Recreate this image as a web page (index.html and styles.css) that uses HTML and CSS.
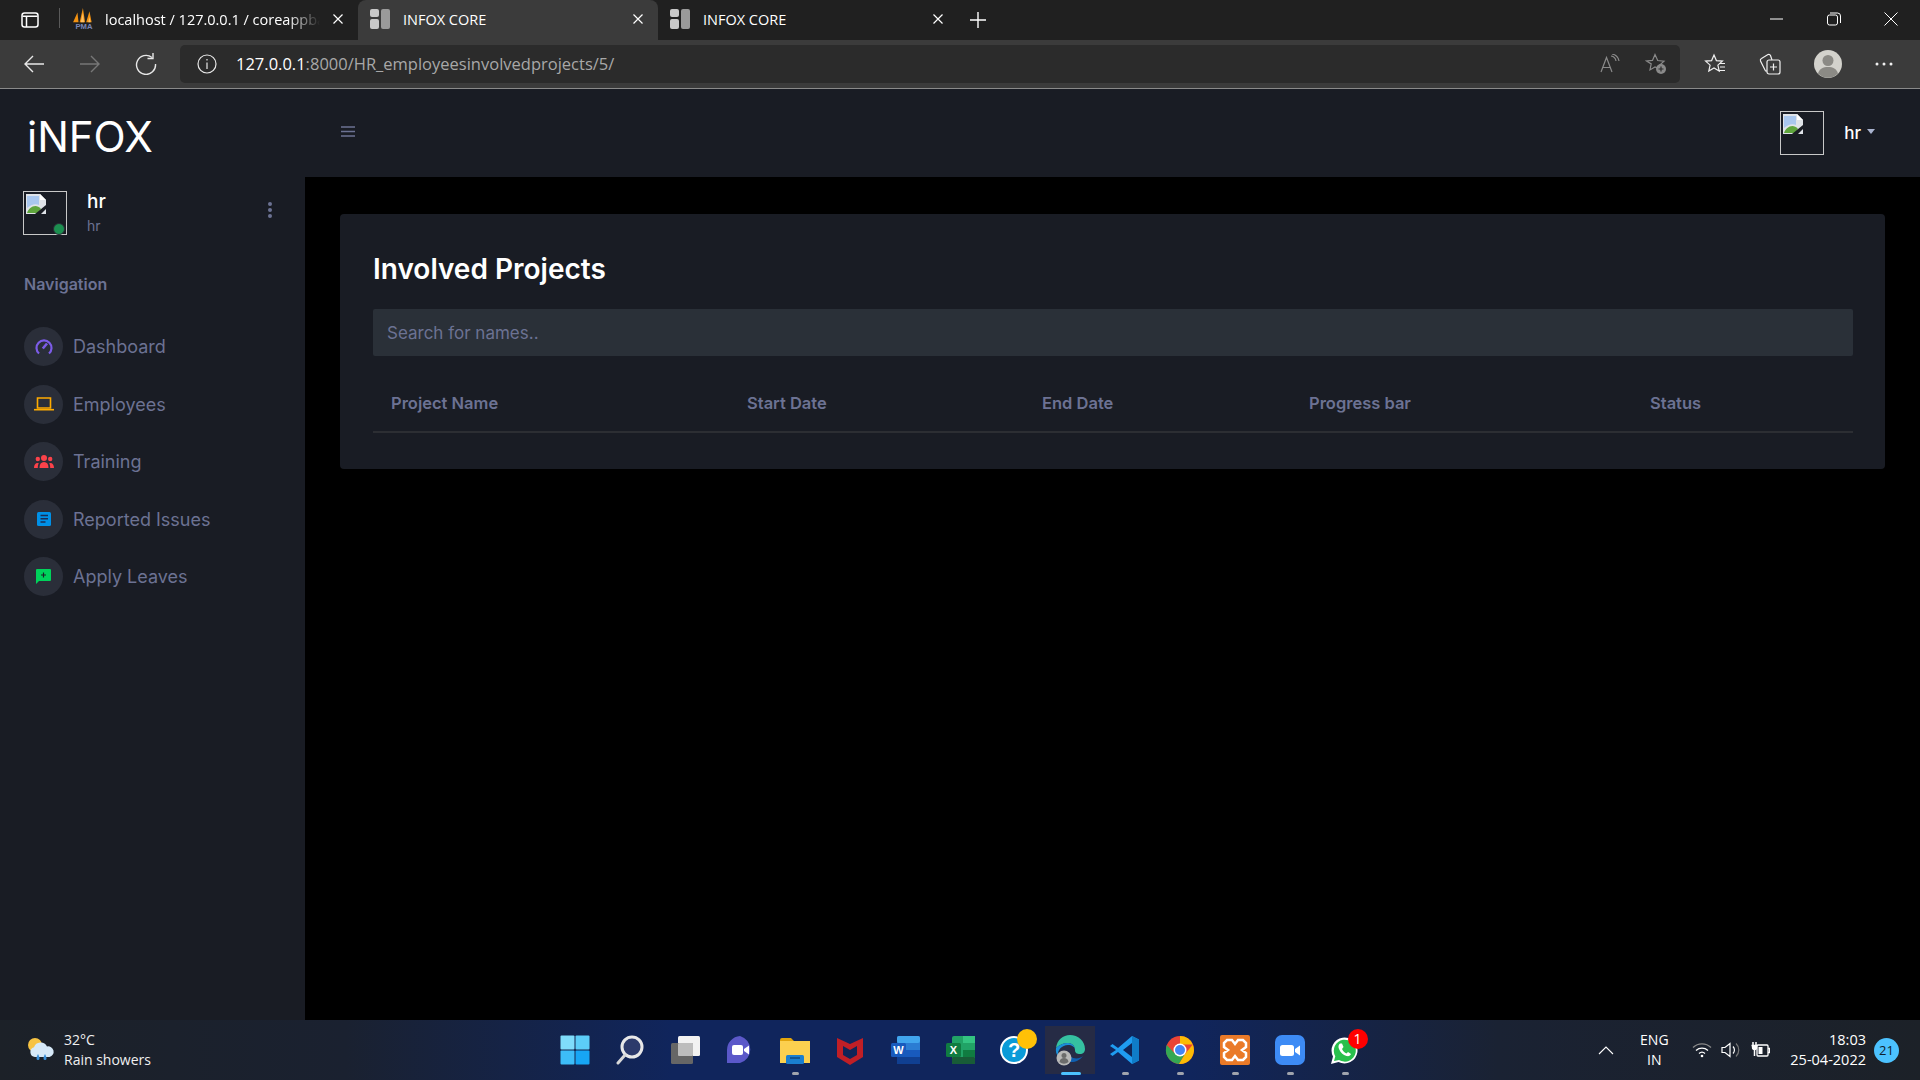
FILE: index.html
```html
<!DOCTYPE html>
<html lang="en">
<head>
  <meta charset="UTF-8">
  <meta name="viewport" content="width=device-width, initial-scale=1.0">
  <title>INFOX CORE</title>
  <link rel="stylesheet" href="styles.css">
</head>
<body>
  <!-- browser tabs -->
  <div class="tabstrip">
    <div class="tab-toggle">
      <svg width="20" height="20" viewBox="0 0 20 20" fill="none" stroke="#fff" stroke-width="1.5"><rect x="2" y="3" width="16" height="14" rx="2.5"/><path d="M2.5 6.2h15M6.5 6.2V17"/></svg>
    </div>
    <div class="tab tab-first">
      <svg class="favicon" width="24" height="24" viewBox="0 0 22 22"><path d="M1 14 5 5l1 9zM7 14l3-13 2 13zM13 14l3-10 2 10z" fill="#f29111"/><path d="M8 14l2-9 1 9zM15 14l1-5 1 5z" fill="#ffc266"/><text x="11" y="20.500" text-anchor="middle" class="pma">PMA</text></svg>
      <span class="tab-title tab-fade">localhost / 127.0.0.1 / coreappba</span>
      <svg class="tab-close" width="12" height="12" viewBox="0 0 12 12" stroke="#fff" stroke-width="1.2"><path d="M1.500 1.500l9 9M10.500 1.500l-9 9"/></svg>
    </div>
    <div class="tab tab-active">
      <svg class="favicon" width="20" height="20" viewBox="0 0 20 20" fill="#c8c8c8"><rect x="0" y="0" width="9" height="8" rx="2"/><rect x="0" y="10" width="9" height="10" rx="2"/><rect x="11" y="0" width="9" height="20" rx="2" fill="#9a9a9a"/></svg>
      <span class="tab-title">INFOX CORE</span>
      <svg class="tab-close" width="12" height="12" viewBox="0 0 12 12" stroke="#fff" stroke-width="1.2"><path d="M1.500 1.500l9 9M10.500 1.500l-9 9"/></svg>
    </div>
    <div class="tab">
      <svg class="favicon" width="20" height="20" viewBox="0 0 20 20" fill="#c8c8c8"><rect x="0" y="0" width="9" height="8" rx="2"/><rect x="0" y="10" width="9" height="10" rx="2"/><rect x="11" y="0" width="9" height="20" rx="2" fill="#9a9a9a"/></svg>
      <span class="tab-title">INFOX CORE</span>
      <svg class="tab-close" width="12" height="12" viewBox="0 0 12 12" stroke="#fff" stroke-width="1.2"><path d="M1.500 1.500l9 9M10.500 1.500l-9 9"/></svg>
    </div>
    <div class="tab-new">
      <svg width="18" height="18" viewBox="0 0 18 18" stroke="#fff" stroke-width="1.4"><path d="M9 1v16M1 9h16"/></svg>
    </div>
    <div class="window-controls">
      <svg width="14" height="14" viewBox="0 0 14 14" stroke="#fff" stroke-width="1"><path d="M0 7h13"/></svg>
      <svg width="14" height="14" viewBox="0 0 14 14" fill="none" stroke="#fff" stroke-width="1"><rect x="0.500" y="3" width="10" height="10" rx="2"/><path d="M3 1h7.500a3 3 0 0 1 3 3v7"/></svg>
      <svg width="14" height="14" viewBox="0 0 14 14" stroke="#fff" stroke-width="1"><path d="M0.500 0.500l13 13M13.500 0.500l-13 13"/></svg>
    </div>
  </div>

  <!-- browser address bar -->
  <div class="toolbar">
    <div class="nav-buttons">
      <svg width="22" height="22" viewBox="0 0 22 22" fill="none" stroke="#e8e8e8" stroke-width="1.4"><path d="M21 11H2M10 3l-8 8 8 8"/></svg>
      <svg width="22" height="22" viewBox="0 0 22 22" fill="none" stroke="#777" stroke-width="1.4"><path d="M1 11h19M12 3l8 8-8 8"/></svg>
      <svg width="22" height="22" viewBox="0 0 22 22" fill="none" stroke="#e8e8e8" stroke-width="1.4"><path d="M17 4.500A9.500 9.500 0 1 0 20.500 11"/><path d="M12.500 5.500H18V0"/></svg>
    </div>
    <div class="address">
      <svg width="20" height="20" viewBox="0 0 20 20" fill="none" stroke="#e8e8e8" stroke-width="1.2"><circle cx="10" cy="10" r="9"/><path d="M10 8.500V15M10 5v1.600"/></svg>
      <span class="url"><span class="url-host">127.0.0.1</span>:8000/HR_employeesinvolvedprojects/5/</span>
      <div class="address-actions">
        <svg width="20" height="20" viewBox="0 0 20 20" fill="none" stroke="#8a8a8a" stroke-width="1.2"><path d="M1 18 6.500 3.500 12 18M3 13.500h7M11 2a6 6 0 0 1 5 5M12 0a9 9 0 0 1 7 7"/></svg>
        <svg width="22" height="22" viewBox="0 0 22 22" fill="none" stroke="#8a8a8a" stroke-width="1.2"><path d="M10 1.500l2.700 6 6.300.6-4.700 4.300 1 4-5.300-2.500-5 3 1.200-6L1.500 8l6-.6z"/><circle cx="16" cy="16" r="5" fill="#8a8a8a" stroke="none"/><path d="M16 13.500v5M13.500 16h5" stroke="#2b2b2b"/></svg>
      </div>
    </div>
    <div class="toolbar-actions">
      <svg width="22" height="22" viewBox="0 0 22 22" fill="none" stroke="#f0f0f0" stroke-width="1.2"><path d="M10 2l2.400 5.600 6 .5-4.500 4 1.300 6-5.200-3.100-5.200 3.100 1.300-6-4.500-4 6-.5zM15 10.500h6M16 14h5M14 17.500h7"/></svg>
      <svg width="22" height="22" viewBox="0 0 22 22" fill="none" stroke="#f0f0f0" stroke-width="1.2"><rect x="8" y="7" width="13" height="14" rx="2"/><path d="M14.500 10.500v7M11 14h7M8 18H6.500L1.500 8a2 2 0 0 1 1-2.500L9 1.500a2 2 0 0 1 2.500 1L13 7"/></svg>
      <svg width="28" height="28" viewBox="0 0 28 28"><circle cx="14" cy="14" r="14" fill="#d3d2cc"/><circle cx="14" cy="10.500" r="5.500" fill="#8b8a85"/><path d="M4 23.500c1.500-5 5-6.500 10-6.500s8.500 1.500 10 6.500a14 14 0 0 1-20 0z" fill="#8b8a85"/></svg>
      <svg width="18" height="6" viewBox="0 0 18 6" fill="#f0f0f0"><circle cx="2" cy="3" r="1.500"/><circle cx="9" cy="3" r="1.500"/><circle cx="16" cy="3" r="1.500"/></svg>
    </div>
  </div>

  <!-- the page -->
  <div class="app">
    <aside class="sidebar">
      <div class="brand">iNFOX</div>
      <div class="profile">
        <div class="avatar avatar-sm">
          <svg width="20" height="20" viewBox="0 0 20 20"><path d="M0 0h14l6 6v14H0z" fill="#dfe3e8"/><path d="M1 2h12v9c-4-2-8 0-12 3z" fill="#a9c7ee"/><path d="M1 19c2-6 9-10 14-4l-3 4z" fill="#5fa53d"/><path d="M9 20 20 11v4l-5 5z" fill="#1a1d24"/><path d="M14 0l6 6h-6z" fill="#fff"/></svg>
          <span class="online"></span>
        </div>
        <div class="profile-text">
          <div class="profile-name">hr</div>
          <div class="profile-role">hr</div>
        </div>
        <svg class="profile-more" width="6" height="16" viewBox="0 0 6 16" fill="#6c7293"><circle cx="3" cy="2" r="2"/><circle cx="3" cy="8" r="2"/><circle cx="3" cy="14" r="2"/></svg>
      </div>
      <div class="nav-title">Navigation</div>
      <ul class="menu">
        <li>
          <span class="menu-icon"><svg width="18" height="18" viewBox="0 0 18 18" fill="none" stroke="#7c5ce8" stroke-width="2.200"><path d="M4 15.500a7.500 7.500 0 1 1 10 0"/><path d="M7.800 10.500 12 5.500" stroke-width="2.600"/></svg></span>
          <span>Dashboard</span>
        </li>
        <li>
          <span class="menu-icon"><svg width="20" height="14" viewBox="0 0 20 14" fill="none" stroke="#ffab00" stroke-width="1.600"><path d="M3.500 1h13v10h-13z"/><path d="M0 12.700h20"/></svg></span>
          <span>Employees</span>
        </li>
        <li>
          <span class="menu-icon"><svg width="20" height="13" viewBox="0 0 20 13" fill="#fc424a"><circle cx="10" cy="3" r="3"/><circle cx="3.800" cy="4" r="2.200"/><circle cx="16.200" cy="4" r="2.200"/><path d="M5.500 13c0-4 1.500-6 4.500-6s4.500 2 4.500 6zM0 13c0-3 1.200-5 3.800-5l1 .3C4 9.500 3.800 11 3.800 13zM20 13c0-3-1.200-5-3.800-5l-1 .3c.8 1.200 1 2.700 1 4.700z"/></svg></span>
          <span>Training</span>
        </li>
        <li>
          <span class="menu-icon"><svg width="14" height="14" viewBox="0 0 14 14"><rect width="14" height="14" rx="1.500" fill="#0090e7"/><path d="M3.500 3.500h7.500M3.500 6.800h7.500M3.500 10h5" stroke="#1a2c55" stroke-width="1.500"/></svg></span>
          <span>Reported Issues</span>
        </li>
        <li>
          <span class="menu-icon"><svg width="15" height="15" viewBox="0 0 15 15"><path d="M1 0h13a1 1 0 0 1 1 1v10a1 1 0 0 1-1 1H3l-3 3V1a1 1 0 0 1 1-1z" fill="#00d25b"/><path d="M7.500 3.500v5M5 6h5" stroke="#1a2028" stroke-width="1.200"/></svg></span>
          <span>Apply Leaves</span>
        </li>
      </ul>
    </aside>

    <div class="main">
      <header class="topbar">
        <svg class="hamburger" width="14" height="11" viewBox="0 0 14 11" stroke="#6c7293" stroke-width="1.300"><path d="M0 1h14M0 5.500h14M0 10h14"/></svg>
        <div class="topbar-user">
          <div class="avatar">
            <svg width="20" height="20" viewBox="0 0 20 20"><path d="M0 0h14l6 6v14H0z" fill="#dfe3e8"/><path d="M1 2h12v9c-4-2-8 0-12 3z" fill="#a9c7ee"/><path d="M1 19c2-6 9-10 14-4l-3 4z" fill="#5fa53d"/><path d="M9 20 20 11v4l-5 5z" fill="#1a1d24"/><path d="M14 0l6 6h-6z" fill="#fff"/></svg>
          </div>
          <span class="topbar-name">hr</span>
          <span class="caret"></span>
        </div>
      </header>

      <main class="content">
        <section class="card">
          <h1 class="card-title">Involved Projects</h1>
          <input class="search" type="text" placeholder="Search for names..">
          <table class="projects">
            <thead>
              <tr>
                <th class="col-name">Project Name</th>
                <th class="col-start">Start Date</th>
                <th class="col-end">End Date</th>
                <th class="col-progress">Progress bar</th>
                <th>Status</th>
              </tr>
            </thead>
          </table>
        </section>
      </main>
    </div>
  </div>

  <!-- windows taskbar -->
  <footer class="taskbar">
    <div class="weather">
      <svg width="28" height="26" viewBox="0 0 28 26"><circle cx="8" cy="8" r="7" fill="#f6c343"/><path d="M8 20a5 5 0 0 1-1-9.800A7 7 0 0 1 20 9.500a5.300 5.300 0 0 1 2.500 10.500z" fill="#d6e9f8"/><path d="M11 17c1 2 1.500 3 1.500 4.500a1.500 1.500 0 0 1-3 0c0-1.500.5-2.500 1.500-4.500zM18 17c1 2 1.500 3 1.500 4.500a1.500 1.500 0 0 1-3 0c0-1.500.5-2.500 1.500-4.500z" fill="#3b8fd8"/></svg>
      <div class="weather-text">
        <div>32°C</div>
        <div>Rain showers</div>
      </div>
    </div>

    <div class="task-icons">
      <div class="task-icon">
        <svg width="30" height="30" viewBox="0 0 30 30"><rect x="0.500" y="0.500" width="14" height="14" rx="1" fill="#7fdcfb"/><rect x="15.500" y="0.500" width="14" height="14" rx="1" fill="#5ccdf8"/><rect x="0.500" y="15.500" width="14" height="14" rx="1" fill="#3dbdf8"/><rect x="15.500" y="15.500" width="14" height="14" rx="1" fill="#17a6f5"/></svg>
      </div>
      <div class="task-icon">
        <svg width="30" height="30" viewBox="0 0 30 30" fill="none"><circle cx="17" cy="12" r="10" fill="#2c3a6b" stroke="#e8e8e8" stroke-width="3"/><path d="M10 20 3 28" stroke="#d8d8d8" stroke-width="3" stroke-linecap="round"/></svg>
      </div>
      <div class="task-icon">
        <svg width="30" height="30" viewBox="0 0 30 30"><rect x="8" y="1" width="22" height="20" rx="1.500" fill="#f2f2f2"/><rect x="1" y="8" width="22" height="21" rx="1.500" fill="#666"/><rect x="8" y="8" width="15" height="13" rx="1" fill="#bdbdbd"/></svg>
      </div>
      <div class="task-icon">
        <svg width="30" height="30" viewBox="0 0 30 30"><path d="M15 1a14 14 0 0 1 0 27H2v-13A14 14 0 0 1 15 1z" fill="#5b58c9"/><path d="M15 1a14 14 0 0 1 0 27 14 14 0 0 0 0-27z" fill="#8177e0"/><rect x="7" y="10" width="11" height="10" rx="2" fill="#fff"/><path d="M19 14l5-3.500v9L19 16z" fill="#fff"/></svg>
      </div>
      <div class="task-icon task-running">
        <svg width="30" height="30" viewBox="0 0 30 30"><path d="M0 5a2 2 0 0 1 2-2h9l3 3h16v22H0z" fill="#e3a50c"/><rect x="0" y="6" width="30" height="22" fill="#fcd04f"/><rect x="6" y="20" width="18" height="9" rx="1.500" fill="#1a7fd0"/><path d="M10 23h10" stroke="#0d3c70" stroke-width="1.200"/></svg>
      </div>
      <div class="task-icon">
        <svg width="28" height="30" viewBox="0 0 28 30"><path d="M1 3l13 6 13-6v19l-13 8-13-8z" fill="#c01f26"/><path d="M7 11l7 4 7-4v9l-7 4-7-4z" fill="#0f2558"/></svg>
      </div>
      <div class="task-icon">
        <svg width="30" height="30" viewBox="0 0 30 30"><rect x="7" y="1" width="23" height="28" rx="2" fill="#2b7cd3"/><rect x="7" y="1" width="23" height="7" rx="2" fill="#41a5ee"/><rect x="7" y="15" width="23" height="7" fill="#185abd"/><rect x="7" y="22" width="23" height="7" fill="#103f91"/><rect x="1" y="8" width="15" height="14" rx="1.500" fill="#185abd"/><text x="8.500" y="19" text-anchor="middle" class="icon-letter">W</text></svg>
      </div>
      <div class="task-icon">
        <svg width="30" height="30" viewBox="0 0 30 30"><rect x="7" y="1" width="23" height="28" rx="2" fill="#21a366"/><rect x="18" y="1" width="12" height="7" fill="#33c481"/><rect x="18" y="15" width="12" height="7" fill="#107c41"/><rect x="7" y="22" width="23" height="7" rx="1" fill="#185c37"/><rect x="1" y="8" width="15" height="14" rx="1.500" fill="#107c41"/><text x="8.500" y="19" text-anchor="middle" class="icon-letter">X</text></svg>
      </div>
      <div class="task-icon">
        <svg width="30" height="30" viewBox="0 0 30 30"><circle cx="14" cy="15" r="13" fill="#0a9bd8" stroke="#fff" stroke-width="2"/><text x="14" y="22" text-anchor="middle" class="icon-help">?</text></svg>
        <span class="task-dot-yellow"></span>
      </div>
      <div class="task-icon task-active">
        <svg width="30" height="32" viewBox="0 0 30 32"><path d="M1 14C2 6 8 1 15 1c8 0 15 6 15 14 0 3-2 5-5 5-3 0-5-1-5-4 0-4-3-7-7-7-5 0-9 2-12 5z" fill="#35c1a1"/><path d="M1 14c3-3 7-5 12-5 4 0 7 3 7 7 0-3-3-5-7-5-6 0-11 5-10 11C1 20 .6 17 1 14z" fill="#1a8fd8"/><path d="M10 26c5 4 14 2 18-4-3 3-9 3-12 1-3-1-6 0-6 3z" fill="#0f5fb0"/><circle cx="9" cy="24" r="7.500" fill="#b8b8b8"/><circle cx="9" cy="21.500" r="2.500" fill="#6c6c6c"/><path d="M4.500 28c.5-3 2-4 4.500-4s4 1 4.500 4a7 7 0 0 1-9 0z" fill="#6c6c6c"/></svg>
      </div>
      <div class="task-icon task-running">
        <svg width="30" height="30" viewBox="0 0 30 30"><path d="M22 1l7 3.500v21L22 29 8 17l-5.500 4L0 19l6-4-6-4 2.500-2L8 13z" fill="#1f9cf0"/><path d="M22 1l7 3.500v21L22 29z" fill="#0f7cc8"/><path d="M22 8 13 15l9 7z" fill="#0f2558"/></svg>
      </div>
      <div class="task-icon task-running">
        <svg width="30" height="30" viewBox="0 0 30 30"><circle cx="15" cy="15" r="14" fill="#ea4335"/><path d="M15 1a14 14 0 0 1 12.800 8.500H15z" fill="#fbbc05"/><path d="M27.800 9.500a14 14 0 0 1-14 19.500L20 19z" fill="#fbbc05"/><path d="M1.800 10a14 14 0 0 0 12 19l6-10-10.500-1z" fill="#34a853"/><circle cx="15" cy="15" r="6.500" fill="#fff"/><circle cx="15" cy="15" r="5" fill="#4285f4"/></svg>
      </div>
      <div class="task-icon task-running">
        <svg width="30" height="30" viewBox="0 0 30 30"><rect x="0" y="0" width="30" height="30" rx="2" fill="#ea7a28"/><path d="M7 5h5l3 4 3-4h5l3 3v4l-4 3 4 3v4l-3 3h-5l-3-4-3 4H7l-3-3v-4l4-3-4-3V8z" fill="none" stroke="#fff" stroke-width="2.500"/></svg>
      </div>
      <div class="task-icon task-running">
        <svg width="30" height="30" viewBox="0 0 30 30"><rect width="30" height="30" rx="7" fill="#3d8bf5"/><rect x="5" y="10" width="14" height="11" rx="2.500" fill="#fff"/><path d="M20 14l5-3.500v10L20 17z" fill="#fff"/></svg>
      </div>
      <div class="task-icon task-running">
        <svg width="30" height="30" viewBox="0 0 30 30"><path d="M1 29l2-7.500A13 13 0 1 1 8.500 27z" fill="#fff"/><path d="M4 26l1.300-4.800A11 11 0 1 1 9 25z" fill="#28c04c"/><path d="M10 8.500c-1.500 1-2 3-1 5.500 1.500 3.500 4 6 7.500 7 2.500.6 4-.5 4.500-2l-3-2-1.500 1.500c-2-.8-3.500-2.300-4.500-4.500L13.500 12l-1.500-3.500z" fill="#fff"/></svg>
        <span class="task-badge">1</span>
      </div>
    </div>

    <div class="tray">
      <svg class="tray-chevron" width="16" height="9" viewBox="0 0 16 9" fill="none" stroke="#fff" stroke-width="1.100"><path d="M1 8l7-7 7 7"/></svg>
      <div class="tray-lang">
        <div>ENG</div>
        <div>IN</div>
      </div>
      <svg width="20" height="16" viewBox="0 0 20 16" fill="none" stroke="#fff" stroke-width="1.300"><path d="M1 5.500a13 13 0 0 1 18 0" stroke="#8a8a8a"/><path d="M4 8.500a9 9 0 0 1 12 0M7 11.500a4.500 4.500 0 0 1 6 0"/><circle cx="10" cy="14" r="1.300" fill="#fff" stroke="none"/></svg>
      <svg width="20" height="18" viewBox="0 0 20 18" fill="none" stroke="#fff" stroke-width="1.200"><path d="M1 6.500h3l5-4v13l-5-4H1z"/><path d="M12 5.500a5 5 0 0 1 0 7"/><path d="M15 2.500a9 9 0 0 1 0 13" stroke="#777"/></svg>
      <svg width="20" height="18" viewBox="0 0 20 18" fill="none" stroke="#fff" stroke-width="1.300"><rect x="7" y="4" width="11" height="11" rx="1"/><path d="M18 7.500h1.500v4H18"/><rect x="8.500" y="6" width="4" height="7" fill="#fff" stroke="none"/><path d="M3 1v3M6 1v3M1.500 4.500h6M4.500 8v7" stroke-width="1.500"/><path d="M2.500 5v1.500a2 2 0 0 0 4 0V5" fill="#fff"/></svg>
      <div class="tray-clock">
        <div>18:03</div>
        <div>25-04-2022</div>
      </div>
      <span class="tray-count">21</span>
    </div>
  </footer>
</body>
</html>
```

FILE: styles.css
```css
/* styles.css */
* {
  box-sizing: border-box;
}

body {
  margin: 0;
  height: 100vh;
  overflow: hidden;
  display: flex;
  flex-direction: column;
  background-color: #000;
  font-family: Inter, Roboto, sans-serif;
}

/* browser tabs */
.tabstrip {
  height: 40px;
  display: flex;
  background-color: #202020;
  color: #fff;
  font-family: "Open Sans", sans-serif;
  font-size: 14.500px;
}

.tab-toggle {
  width: 60px;
  display: flex;
  align-items: center;
  padding-left: 20px;
  position: relative;
}

.tab-toggle::after {
  content: "";
  position: absolute;
  right: 0;
  top: 8px;
  bottom: 12px;
  width: 1px;
  background-color: #5a5a5a;
}

.tab {
  width: 300px;
  height: 40px;
  display: flex;
  align-items: center;
  padding: 0 14px 2px 12px;
}

.tab-first {
  width: 298px;
}

.tab-active {
  background-color: #3b3b3b;
  border-radius: 8px 8px 0 0;
}

.favicon {
  flex: none;
}

.pma {
  font: bold 7px "Liberation Sans", sans-serif;
  fill: #7a86b8;
}

.tab-title {
  flex: 1;
  margin-left: 13px;
  white-space: nowrap;
  overflow: hidden;
}

.tab-fade {
  margin-left: 9px;
  -webkit-mask-image: linear-gradient(to right, #000 85%, transparent 100%);
  mask-image: linear-gradient(to right, #000 85%, transparent 100%);
}

.tab-close {
  flex: none;
  margin-left: 12px;
}

.tab-new {
  display: flex;
  align-items: center;
  margin-left: 11px;
}

.window-controls {
  margin-left: auto;
  display: flex;
  align-items: center;
  gap: 43px;
  padding: 0 22px 2px 0;
}

/* address bar */
.toolbar {
  height: 49px;
  display: flex;
  align-items: center;
  padding-bottom: 1px;
  background-color: #3b3b3b;
  border-bottom: 1px solid #8a8a8a;
}

.nav-buttons {
  width: 180px;
  display: flex;
  align-items: center;
  gap: 34px;
  padding-left: 23px;
}

.address {
  width: 1500px;
  height: 38px;
  display: flex;
  align-items: center;
  padding: 0 13px 0 17px;
  border-radius: 5px;
  background-color: #2b2b2b;
  font-family: "Open Sans", sans-serif;
  font-size: 16.500px;
  color: #a8a8a8;
}

.url {
  margin-left: 19px;
}

.url-host {
  color: #fff;
}

.address-actions {
  margin-left: auto;
  display: flex;
  align-items: center;
  gap: 25px;
}

.toolbar-actions {
  flex: 1;
  display: flex;
  align-items: center;
  gap: 33px;
  padding-left: 24px;
}

/* page */
.app {
  flex: 1;
  display: flex;
  min-height: 0;
}

.sidebar {
  width: 305px;
  flex: none;
  padding: 0 23px;
  background-color: #191c24;
}

.brand {
  height: 88px;
  padding: 22px 0 0 4px;
  font-size: 42px;
  line-height: 52px;
  color: #fff;
}

.profile {
  display: flex;
  align-items: flex-start;
  height: 44px;
  margin-top: 14px;
}

.avatar {
  position: relative;
  flex: none;
  width: 44px;
  height: 44px;
  padding: 2px;
  border: 1px solid #c8c8c8;
}

.avatar svg {
  display: block;
}

.online {
  position: absolute;
  right: 1px;
  bottom: -1px;
  width: 12px;
  height: 12px;
  border: 1px solid #2a2d36;
  border-radius: 50%;
  background-color: #1c8f50;
}

.profile-text {
  margin-left: 20px;
  flex: 1;
}

.profile-name {
  font-size: 19px;
  font-weight: 500;
  line-height: 22px;
  color: #fff;
}

.profile-role {
  margin-top: 5px;
  font-size: 14px;
  line-height: 16px;
  color: #6c7293;
}

.profile-more {
  margin: 11px 9px 0 0;
}

.nav-title {
  margin-top: 39px;
  padding-left: 1px;
  font-size: 16px;
  font-weight: 600;
  line-height: 20px;
  color: #6c7293;
}

.menu {
  list-style: none;
  margin: 33px 0 0;
  padding: 0;
  display: flex;
  flex-direction: column;
  gap: 18px;
}

.menu li {
  height: 39.500px;
  display: flex;
  align-items: center;
  gap: 10px;
  padding-left: 1px;
  font-size: 18px;
  color: #6c7293;
}

.menu-icon {
  width: 39px;
  height: 39px;
  flex: none;
  display: flex;
  align-items: center;
  justify-content: center;
  border-radius: 50%;
  background-color: #2a2e39;
}

.main {
  flex: 1;
  display: flex;
  flex-direction: column;
  min-width: 0;
}

.topbar {
  height: 88px;
  flex: none;
  display: flex;
  justify-content: space-between;
  align-items: flex-start;
  padding: 37px 45px 0 36px;
  background-color: #191c24;
}

.hamburger {
  display: block;
}

.topbar-user {
  display: flex;
  align-items: center;
  margin-top: -15px;
}

.topbar-name {
  margin-left: 20px;
  font-size: 17px;
  font-weight: 500;
  color: #fff;
}

.caret {
  margin: -3px 0 0 6px;
  border-left: 4.500px solid transparent;
  border-right: 4.500px solid transparent;
  border-top: 5px solid #a9b3cf;
}

.content {
  flex: 1;
  padding: 37px 35px 0;
  background-color: #000;
}

.card {
  height: 255px;
  padding: 33px 32px 33px 33px;
  border-radius: 4px;
  background-color: #191c24;
}

.card-title {
  margin: 0;
  padding-top: 4px;
  font-size: 28px;
  font-weight: 600;
  line-height: 36px;
  color: #fff;
}

.search {
  display: block;
  width: 100%;
  height: 47px;
  margin-top: 22px;
  padding: 0 14px;
  border: none;
  border-radius: 2px;
  outline: none;
  background-color: #2a3038;
  font-family: Inter, Roboto, sans-serif;
  font-size: 17px;
  color: #fff;
}

.search::placeholder {
  color: #6c7293;
  opacity: 1;
}

.projects {
  width: 100%;
  margin-top: 20px;
  border-collapse: collapse;
  table-layout: fixed;
}

.projects th {
  height: 56px;
  padding: 0 18px 2px;
  border-bottom: 2px solid #2c2e33;
  text-align: left;
  font-size: 16.500px;
  font-weight: 600;
  color: #6c7293;
}

.col-name {
  width: 356px;
}

.col-start {
  width: 295px;
}

.col-end {
  width: 267px;
}

.col-progress {
  width: 341px;
}

/* windows taskbar */
.taskbar {
  height: 60px;
  flex: none;
  display: grid;
  grid-template-columns: 1fr auto 1fr;
  align-items: center;
  background: linear-gradient(to right, #1c2128 0%, #1a2130 18%, #10255c 35%, #10255c 62%, #1a2233 78%, #1c2128 100%);
  color: #fff;
  font-family: "Open Sans", sans-serif;
  font-size: 14px;
}

.weather {
  display: flex;
  align-items: center;
  gap: 9px;
  padding-left: 27px;
}

.weather-text {
  line-height: 20px;
  color: #f0f0f0;
}

.task-icons {
  display: flex;
}

.task-icon {
  position: relative;
  width: 55px;
  height: 60px;
  display: flex;
  align-items: center;
  justify-content: center;
}

.task-running::after {
  content: "";
  position: absolute;
  left: 24px;
  bottom: 5px;
  width: 7px;
  height: 3px;
  border-radius: 2px;
  background-color: #a0a4ad;
}

.task-active {
  border-radius: 4px;
  background: linear-gradient(#262b45, #262b45) center / 50px 48px no-repeat;
}

.task-active::after {
  content: "";
  position: absolute;
  left: 18px;
  bottom: 5px;
  width: 20px;
  height: 3px;
  border-radius: 2px;
  background-color: #4cc2ff;
}

.icon-letter {
  font: bold 11px "Liberation Sans", sans-serif;
  fill: #fff;
}

.icon-help {
  font: bold 20px "Liberation Sans", sans-serif;
  fill: #fff;
}

.task-dot-yellow {
  position: absolute;
  left: 29px;
  top: 9px;
  width: 20px;
  height: 20px;
  border-radius: 50%;
  background-color: #ffc107;
}

.task-badge {
  position: absolute;
  left: 30px;
  top: 9px;
  width: 20px;
  height: 20px;
  border-radius: 50%;
  background-color: #f00;
  font-size: 14px;
  line-height: 20px;
  text-align: center;
}

.tray {
  display: flex;
  align-items: center;
  justify-content: flex-end;
  padding-right: 21px;
}

.tray-chevron {
  margin-right: 24px;
}

.tray-lang {
  width: 32px;
  margin-right: 22px;
  text-align: center;
  line-height: 20px;
}

.tray svg + svg {
  margin-left: 9px;
}

.tray-clock {
  margin-left: 20px;
  font-size: 14.500px;
  text-align: right;
  line-height: 20px;
}

.tray-count {
  width: 25px;
  height: 25px;
  margin-left: 8px;
  border-radius: 50%;
  background-color: #4cc2ff;
  color: #10202c;
  font-size: 13px;
  line-height: 25px;
  text-align: center;
}
```
